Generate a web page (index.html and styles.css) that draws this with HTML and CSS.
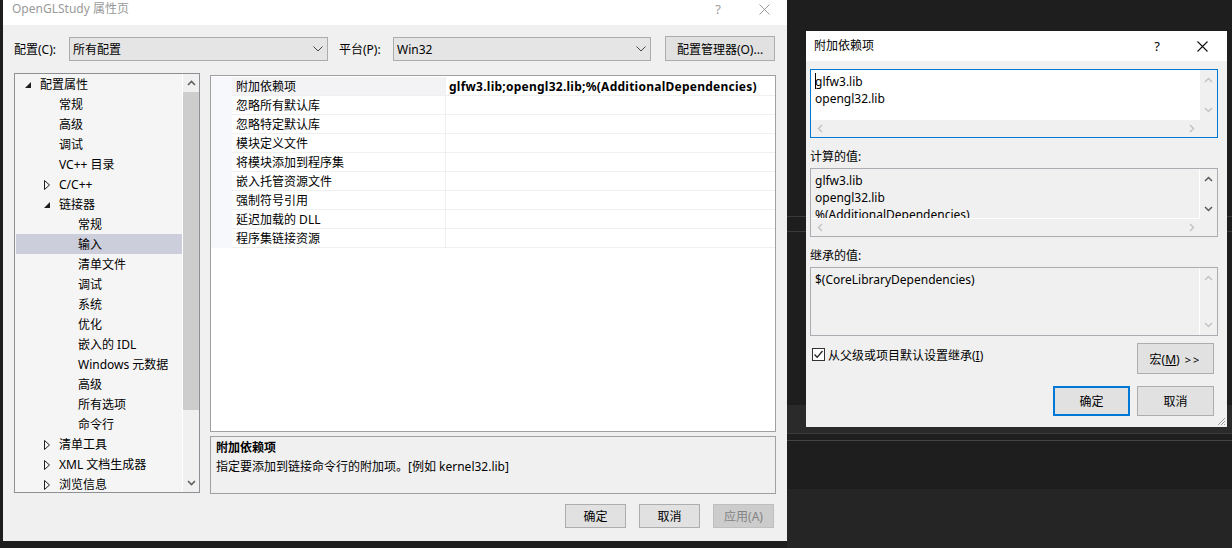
FILE: index.html
```html
<!DOCTYPE html>
<html lang="zh-CN">
<head>
    <meta charset="UTF-8">
    <title>OpenGLStudy 属性页</title>
    <link rel="stylesheet" href="styles.css">
</head>
<body>
    <!-- editor behind the dialogs -->
    <div class="ide-band"></div>
    <div class="ide-line line-a"></div>
    <div class="ide-line line-b"></div>
    <div class="ide-line line-c"></div>
    <div class="ide-line line-d"></div>
    <div class="ide-output"></div>

    <!-- property pages -->
    <div class="win win-main">
        <div class="titlebar">
            <span class="title">OpenGLStudy 属性页</span>
            <span class="tb-help">?</span>
            <span class="tb-close">
                <svg width="11" height="11" viewBox="0 0 11 11"><path d="M0.5 0.5L10.5 10.5M10.5 0.5L0.5 10.5" stroke="#9a9a9a" stroke-width="1" fill="none"/></svg>
            </span>
        </div>
        <div class="main-body">
            <div class="cfg-row">
                <span class="cfg-label">配置(C):</span>
                <div class="combo combo-cfg">
                    <span>所有配置</span>
                    <svg width="10" height="6" viewBox="0 0 10 6"><polyline points="0.5,0.5 5,5 9.5,0.5" fill="none" stroke="#444" stroke-width="1"/></svg>
                </div>
                <span class="cfg-label plat-label">平台(P):</span>
                <div class="combo combo-plat">
                    <span>Win32</span>
                    <svg width="10" height="6" viewBox="0 0 10 6"><polyline points="0.5,0.5 5,5 9.5,0.5" fill="none" stroke="#444" stroke-width="1"/></svg>
                </div>
                <button class="btn btn-mgr">配置管理器(O)...</button>
            </div>

            <div class="split">
                <div class="tree">
                    <ul class="tree-list">
                        <li class="node lv1"><i class="tw"><svg width="7" height="7" viewBox="0 0 7 7"><polygon points="6,0 6,6 0,6" fill="#1e1e1e"/></svg></i>配置属性</li>
                        <li class="node lv2"><i class="tw"></i>常规</li>
                        <li class="node lv2"><i class="tw"></i>高级</li>
                        <li class="node lv2"><i class="tw"></i>调试</li>
                        <li class="node lv2"><i class="tw"></i>VC++ 目录</li>
                        <li class="node lv2"><i class="tw"><svg width="7" height="10" viewBox="0 0 7 10"><polygon points="0.5,0.5 5.5,5 0.5,9.5" fill="none" stroke="#1e1e1e" stroke-width="1"/></svg></i>C/C++</li>
                        <li class="node lv2"><i class="tw"><svg width="7" height="7" viewBox="0 0 7 7"><polygon points="6,0 6,6 0,6" fill="#1e1e1e"/></svg></i>链接器</li>
                        <li class="node lv3"><i class="tw"></i>常规</li>
                        <li class="node lv3 selected"><i class="tw"></i>输入</li>
                        <li class="node lv3"><i class="tw"></i>清单文件</li>
                        <li class="node lv3"><i class="tw"></i>调试</li>
                        <li class="node lv3"><i class="tw"></i>系统</li>
                        <li class="node lv3"><i class="tw"></i>优化</li>
                        <li class="node lv3"><i class="tw"></i>嵌入的 IDL</li>
                        <li class="node lv3"><i class="tw"></i>Windows 元数据</li>
                        <li class="node lv3"><i class="tw"></i>高级</li>
                        <li class="node lv3"><i class="tw"></i>所有选项</li>
                        <li class="node lv3"><i class="tw"></i>命令行</li>
                        <li class="node lv2"><i class="tw"><svg width="7" height="10" viewBox="0 0 7 10"><polygon points="0.5,0.5 5.5,5 0.5,9.5" fill="none" stroke="#1e1e1e" stroke-width="1"/></svg></i>清单工具</li>
                        <li class="node lv2"><i class="tw"><svg width="7" height="10" viewBox="0 0 7 10"><polygon points="0.5,0.5 5.5,5 0.5,9.5" fill="none" stroke="#1e1e1e" stroke-width="1"/></svg></i>XML 文档生成器</li>
                        <li class="node lv2"><i class="tw"><svg width="7" height="10" viewBox="0 0 7 10"><polygon points="0.5,0.5 5.5,5 0.5,9.5" fill="none" stroke="#1e1e1e" stroke-width="1"/></svg></i>浏览信息</li>
                    </ul>
                    <div class="vscroll tree-scroll">
                        <span class="sarrow"><svg width="9" height="6" viewBox="0 0 9 6"><polyline points="1,5 4.5,1.5 8,5" fill="none" stroke="#606060" stroke-width="1.6"/></svg></span>
                        <span class="thumb"></span>
                        <span class="track"></span>
                        <span class="sarrow"><svg width="9" height="6" viewBox="0 0 9 6"><polyline points="1,1 4.5,4.5 8,1" fill="none" stroke="#606060" stroke-width="1.6"/></svg></span>
                    </div>
                </div>

                <div class="right-col">
                    <div class="grid">
                        <div class="grid-row current">
                            <div class="gutter"></div>
                            <div class="name">附加依赖项</div>
                            <div class="val">glfw3.lib;opengl32.lib;%(AdditionalDependencies)</div>
                        </div>
                        <div class="grid-row"><div class="gutter"></div><div class="name">忽略所有默认库</div><div class="val"></div></div>
                        <div class="grid-row"><div class="gutter"></div><div class="name">忽略特定默认库</div><div class="val"></div></div>
                        <div class="grid-row"><div class="gutter"></div><div class="name">模块定义文件</div><div class="val"></div></div>
                        <div class="grid-row"><div class="gutter"></div><div class="name">将模块添加到程序集</div><div class="val"></div></div>
                        <div class="grid-row"><div class="gutter"></div><div class="name">嵌入托管资源文件</div><div class="val"></div></div>
                        <div class="grid-row"><div class="gutter"></div><div class="name">强制符号引用</div><div class="val"></div></div>
                        <div class="grid-row"><div class="gutter"></div><div class="name">延迟加载的 DLL</div><div class="val"></div></div>
                        <div class="grid-row"><div class="gutter"></div><div class="name">程序集链接资源</div><div class="val"></div></div>
                    </div>
                    <div class="desc">
                        <div class="desc-title">附加依赖项</div>
                        <div class="desc-text">指定要添加到链接命令行的附加项。[例如 kernel32.lib]</div>
                    </div>
                </div>
            </div>

            <div class="btn-row">
                <button class="btn">确定</button>
                <button class="btn">取消</button>
                <button class="btn disabled">应用(A)</button>
            </div>
        </div>
    </div>

    <!-- additional dependencies editor -->
    <div class="win win-edit">
        <div class="titlebar">
            <span class="title">附加依赖项</span>
            <span class="tb-help">?</span>
            <span class="tb-close">
                <svg width="11" height="11" viewBox="0 0 11 11"><path d="M0.5 0.5L10.5 10.5M10.5 0.5L0.5 10.5" stroke="#111" stroke-width="1.1" fill="none"/></svg>
            </span>
        </div>
        <div class="edit-body">
            <div class="ebox focused">
                <div class="etext"><span class="caret"></span>glfw3.lib
opengl32.lib</div>
                <div class="vscroll">
                    <span class="sarrow"><svg width="9" height="6" viewBox="0 0 9 6"><polyline points="1,5 4.5,1.5 8,5" fill="none" stroke="#c4c4c4" stroke-width="1.5"/></svg></span>
                    <span class="sarrow"><svg width="9" height="6" viewBox="0 0 9 6"><polyline points="1,1 4.5,4.5 8,1" fill="none" stroke="#c4c4c4" stroke-width="1.5"/></svg></span>
                </div>
                <div class="hscroll">
                    <span class="sarrow"><svg width="6" height="9" viewBox="0 0 6 9"><polyline points="5,1 1.5,4.5 5,8" fill="none" stroke="#c4c4c4" stroke-width="1.5"/></svg></span>
                    <span class="sarrow"><svg width="6" height="9" viewBox="0 0 6 9"><polyline points="1,1 4.5,4.5 1,8" fill="none" stroke="#c4c4c4" stroke-width="1.5"/></svg></span>
                </div>
                <div class="corner"></div>
            </div>

            <div class="elabel">计算的值:</div>
            <div class="ebox readonly">
                <div class="etext">glfw3.lib
opengl32.lib
%(AdditionalDependencies)</div>
                <div class="vscroll">
                    <span class="sarrow"><svg width="9" height="6" viewBox="0 0 9 6"><polyline points="1,5 4.5,1.5 8,5" fill="none" stroke="#5a5a5a" stroke-width="1.5"/></svg></span>
                    <span class="sarrow"><svg width="9" height="6" viewBox="0 0 9 6"><polyline points="1,1 4.5,4.5 8,1" fill="none" stroke="#5a5a5a" stroke-width="1.5"/></svg></span>
                </div>
                <div class="hscroll">
                    <span class="sarrow"><svg width="6" height="9" viewBox="0 0 6 9"><polyline points="5,1 1.5,4.5 5,8" fill="none" stroke="#c4c4c4" stroke-width="1.5"/></svg></span>
                    <span class="sarrow"><svg width="6" height="9" viewBox="0 0 6 9"><polyline points="1,1 4.5,4.5 1,8" fill="none" stroke="#c4c4c4" stroke-width="1.5"/></svg></span>
                </div>
                <div class="corner"></div>
            </div>

            <div class="elabel">继承的值:</div>
            <div class="ebox readonly single">
                <div class="etext">$(CoreLibraryDependencies)</div>
                <div class="vscroll">
                    <span class="sarrow"><svg width="9" height="6" viewBox="0 0 9 6"><polyline points="1,5 4.5,1.5 8,5" fill="none" stroke="#c4c4c4" stroke-width="1.5"/></svg></span>
                    <span class="sarrow"><svg width="9" height="6" viewBox="0 0 9 6"><polyline points="1,1 4.5,4.5 8,1" fill="none" stroke="#c4c4c4" stroke-width="1.5"/></svg></span>
                </div>
            </div>

            <div class="inherit-row">
                <span class="chk">
                    <svg width="11" height="11" viewBox="0 0 11 11"><polyline points="1.5,5.5 4.2,8.3 9.5,2" fill="none" stroke="#222" stroke-width="1.3"/></svg>
                </span>
                <span class="chk-label">从父级或项目默认设置继承(<u>I</u>)</span>
                <button class="btn btn-macro">宏(<u>M</u>) <span class="gt">&gt;&gt;</span></button>
            </div>

            <div class="edit-actions">
                <button class="btn btn-default">确定</button>
                <button class="btn">取消</button>
            </div>
        </div>
        <svg class="grip" width="9" height="9" viewBox="0 0 9 9">
            <path d="M8 1L1 8M8 4L4 8M8 7L7 8" stroke="#a0a0a0" stroke-width="1" fill="none"/>
        </svg>
    </div>
</body>
</html>
```

FILE: styles.css
```css
* {
    box-sizing: border-box;
}

html,
body {
    margin: 0;
    padding: 0;
}

body {
    width: 1232px;
    height: 548px;
    overflow: hidden;
    position: relative;
    background: #1e1e1e;
    font-family: "Noto Sans", "Noto Sans CJK SC", sans-serif;
    font-size: 12px;
    color: #000;
}

button {
    font: inherit;
    color: inherit;
}

/* background editor bits */
.ide-band {
    position: absolute;
    left: 787px;
    top: 405px;
    width: 445px;
    height: 28px;
    background: #2a2a2b;
}

.ide-line {
    position: absolute;
    left: 787px;
    right: 0;
    height: 1px;
    background: #3a3a3c;
}

.line-a { top: 216px; }
.line-b { top: 231px; }
.line-c { top: 433px; }
.line-d { top: 440px; background: #444446; }

.ide-output {
    position: absolute;
    left: 787px;
    right: 0;
    top: 489px;
    bottom: 0;
    background: #252526;
}

/* windows */
.win {
    position: absolute;
    background: #f0f0f0;
    display: flex;
    flex-direction: column;
}

.win-main {
    left: 3px;
    top: 0;
    width: 784px;
    height: 541px;
}

.win-edit {
    left: 806px;
    top: 31px;
    width: 421px;
    height: 396px;
}

.titlebar {
    background: #fff;
    display: flex;
    align-items: center;
    flex-shrink: 0;
    line-height: 16px;
}

.win-main .titlebar {
    height: 25px;
    padding: 1px 0 0 9px;
    align-items: flex-start;
    color: #9a9a9a;
}

.win-main .tb-close {
    margin-top: 3px;
}

.win-edit .titlebar {
    height: 30px;
    padding-left: 8px;
    color: #000;
}

.tb-help {
    margin-left: auto;
    width: 10px;
    text-align: center;
    font-size: 13px;
}

.tb-close {
    display: flex;
    margin-left: 36px;
    margin-right: 17px;
}

.win-edit .tb-close {
    margin-left: 35px;
    margin-right: 19px;
}

/* main dialog */
.main-body {
    flex: 1;
    padding: 11px 11px 0 11px;
    display: flex;
    flex-direction: column;
}

.cfg-row {
    display: flex;
    align-items: center;
    height: 25px;
}

.cfg-label {
    width: 55px;
    line-height: 16px;
    padding-top: 2px;
    white-space: nowrap;
}

.plat-label {
    width: 54px;
    margin-left: 11px;
}

.combo {
    height: 24px;
    margin-top: 1px;
    border: 1px solid #acacac;
    background: #e5e5e5;
    display: flex;
    align-items: center;
    justify-content: space-between;
    padding: 1px 4px 0 3px;
    line-height: 16px;
}

.combo svg {
    margin-top: -1px;
}

.combo-cfg { width: 259px; }
.combo-plat { width: 258px; }

.btn {
    border: 1px solid #adadad;
    background: #e1e1e1;
    padding: 2px 0 0 0;
    line-height: 16px;
    text-align: center;
    white-space: nowrap;
}

.btn-mgr {
    width: 110px;
    height: 25px;
    margin-left: 14px;
}

.split {
    display: flex;
    gap: 10px;
    margin-top: 12px;
    height: 421px;
}

.tree {
    width: 186px;
    height: 420px;
    border: 1px solid #8e8f94;
    background: #f5f5f5;
    display: flex;
}

.tree-list {
    flex: 1;
    list-style: none;
    margin: 0;
    padding: 0;
    overflow: hidden;
}

.node {
    height: 20px;
    line-height: 18px;
    padding-top: 2px;
    display: flex;
    align-items: center;
    white-space: nowrap;
    margin-left: 1px;
}

.node.lv1 { padding-left: 9px; }
.node.lv2 { padding-left: 28px; }
.node.lv3 { padding-left: 47px; }

.node.selected {
    background: #cccedb;
}

.tw {
    width: 15px;
    height: 18px;
    display: flex;
    align-items: center;
    font-style: normal;
}

.vscroll {
    width: 17px;
    display: flex;
    flex-direction: column;
    justify-content: space-between;
    background: #f0f0f0;
}

.tree-scroll {
    border-left: 1px solid #fff;
    width: 17px;
    justify-content: flex-start;
}

.sarrow {
    height: 20px;
    display: flex;
    align-items: center;
    justify-content: center;
    flex-shrink: 0;
}

.tree-scroll .sarrow {
    height: 18px;
}

.tree-scroll .thumb {
    height: 318px;
    background: #cdcdcd;
}

.tree-scroll .track {
    flex: 1;
}

.right-col {
    flex: 1;
    display: flex;
    flex-direction: column;
    gap: 4px;
    padding-top: 2px;
}

.grid {
    height: 357px;
    border: 1px solid #a0a0a0;
    background: #fff;
    padding-top: 1px;
}

.grid-row {
    display: flex;
    height: 19px;
    line-height: 17px;
}

.gutter {
    width: 21px;
    background: #f6f8fc;
}

.name {
    width: 214px;
    padding: 1px 0 0 4px;
    border-bottom: 1px solid #f0f0f0;
    border-right: 1px solid #f0f0f0;
    white-space: nowrap;
}

.val {
    flex: 1;
    padding: 1px 0 0 3px;
    border-bottom: 1px solid #f0f0f0;
    white-space: nowrap;
}

.grid-row.current .name {
    background: #f3f3f6;
}

.grid-row.current .val {
    font-weight: bold;
    letter-spacing: 0.25px;
}

.desc {
    height: 58px;
    border: 1px solid #a0a0a0;
    padding: 1px 5px 0 5px;
    line-height: 19px;
}

.desc-title {
    font-weight: bold;
}

.btn-row {
    display: flex;
    justify-content: flex-end;
    gap: 13px;
    margin-top: 10px;
    padding-right: 2px;
}

.btn-row .btn {
    width: 61px;
    height: 24px;
}

.btn.disabled {
    background: #cccccc;
    border-color: #bfbfbf;
    color: #838383;
}

/* editor dialog */
.edit-body {
    flex: 1;
    padding: 8px 9px 0 4px;
    display: flex;
    flex-direction: column;
}

.ebox {
    height: 69px;
    border: 1px solid #abadb3;
    display: grid;
    grid-template-columns: 1fr 17px;
    grid-template-rows: 50px 17px;
    background: #f0f0f0;
}

.ebox.focused {
    border-color: #0078d7;
}

.ebox.focused .etext {
    background: #fff;
}

.ebox.readonly .etext {
    border-right: 1px solid #fff;
    border-bottom: 1px solid #fff;
}

.ebox.single {
    grid-template-rows: 67px;
}

.ebox.single .etext {
    border-bottom: none;
}

.etext {
    padding: 3px 4px 0 4px;
    line-height: 17px;
    white-space: pre;
    overflow: hidden;
}

.caret {
    display: inline-block;
    width: 1px;
    height: 16px;
    background: #000;
    vertical-align: -3px;
    margin-right: -1px;
}

.hscroll {
    display: flex;
    justify-content: space-between;
}

.hscroll .sarrow {
    width: 17px;
    height: 17px;
}

.elabel {
    margin-top: 10px;
    margin-bottom: 3px;
    line-height: 17px;
}

.inherit-row {
    display: flex;
    align-items: flex-start;
    margin-top: 7px;
    height: 31px;
}

.chk {
    width: 13px;
    height: 13px;
    margin: 5px 0 0 2px;
    border: 1px solid #333;
    background: #fff;
    display: flex;
    align-items: center;
    justify-content: center;
}

.chk-label {
    margin: 5px 0 0 3px;
    line-height: 15px;
}

.btn-macro {
    margin-left: auto;
    margin-right: 4px;
    width: 77px;
    height: 31px;
}

.gt {
    letter-spacing: 2px;
    margin-left: 2px;
    font-size: 11px;
}

.edit-actions {
    display: flex;
    justify-content: flex-end;
    gap: 7px;
    margin-top: 12px;
    margin-right: 4px;
}

.edit-actions .btn {
    width: 77px;
    height: 30px;
}

.btn-default {
    border: 2px solid #0078d7;
}

.grip {
    position: absolute;
    right: 1px;
    bottom: 1px;
}
```
